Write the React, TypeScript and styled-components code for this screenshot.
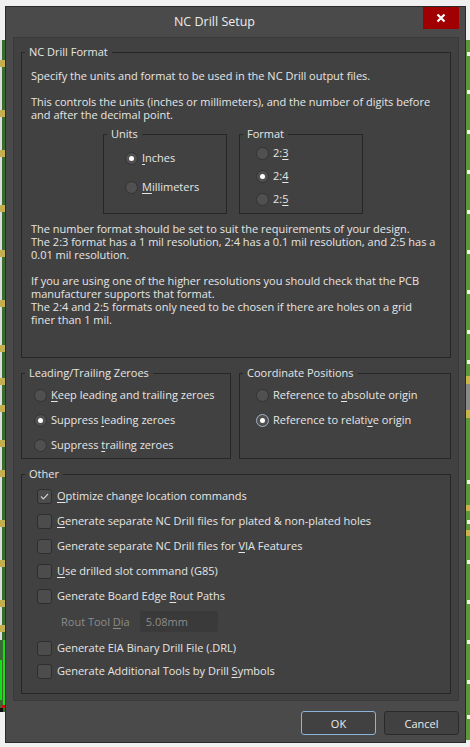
import React from 'react';
import styled, { createGlobalStyle } from 'styled-components';

const Global = createGlobalStyle`
  html, body { margin: 0; padding: 0; background: #f0f0f0; }
  body { font-family: "Open Sans", "Noto Sans", sans-serif; }
  #root { width: 470px; height: 747px; }
`;

const Stage = styled.div`
  width: 470px;
  height: 747px;
  display: grid;
  grid-template-columns: 5px 461px 4px;
  grid-template-rows: 6px 737px 4px;
  background: #f0f0f0;
  overflow: hidden;
`;

const Strip = styled.svg<{ $col: number }>`
  grid-column: ${(p) => p.$col};
  grid-row: 1 / span 3;
  display: block;
`;

const Window = styled.div`
  grid-column: 2;
  grid-row: 2;
  box-sizing: border-box;
  border: 1px solid #2a2a2a;
  background: #4a4a4a;
  display: flex;
  flex-direction: column;
  color: #e6e6e6;
  font-size: 11px;
`;

const TitleBar = styled.div`
  height: 30px;
  display: flex;
  align-items: flex-start;
  padding-right: 6px;
`;

const Title = styled.div`
  flex: 1;
  text-align: center;
  font-size: 12.5px;
  line-height: 30px;
  color: #ececec;
`;

const CloseButton = styled.div`
  width: 36px;
  height: 22px;
  background: #a00000;
  display: flex;
  align-items: center;
  justify-content: center;
`;

const Panel = styled.div`
  box-sizing: border-box;
  margin: 0 6px 0 7px;
  height: 664px;
  border: 1px solid #3a3a3a;
  background: #414141;
  padding: 7px 7px 0 7px;
  display: flex;
  flex-direction: column;
`;

const Frame = styled.fieldset<{ $h: number; $w?: number }>`
  box-sizing: border-box;
  margin: 0;
  padding: 0;
  border: 1px solid #262626;
  height: ${(p) => p.$h}px;
  ${(p) => (p.$w ? `width: ${p.$w}px; flex: none;` : '')}
  min-width: 0;
`;

const Legend = styled.legend`
  margin-left: 3px;
  padding: 0 4px 0 4px;
  line-height: 14px;
  font-size: 11px;
  color: #e6e6e6;
`;

const Para = styled.p<{ $top: number }>`
  margin: ${(p) => p.$top}px 0 0 9px;
  line-height: 13px;
  font-size: 11px;
`;

const BoxRow = styled.div`
  display: flex;
  gap: 12px;
  margin: 6px 0 0 81px;
`;

const SubFrame = styled(Frame)`
  width: 124px;
  flex: none;
`;

const OptionList = styled.div<{ $pl: number; $gap: number; $pt: number }>`
  display: flex;
  flex-direction: column;
  gap: ${(p) => p.$gap}px;
  padding: ${(p) => p.$pt}px 0 0 ${(p) => p.$pl}px;
`;

const Option = styled.div<{ $shift?: number }>`
  display: flex;
  align-items: center;
  gap: 4px;
  height: 16px;
  line-height: 16px;
  white-space: nowrap;
  color: #e6e6e6;
  margin-top: ${(p) => p.$shift ?? 0}px;
`;

const RadioDot = styled.span<{ $on?: boolean; $focus?: boolean }>`
  box-sizing: border-box;
  width: 13px;
  height: 13px;
  border-radius: 50%;
  flex: none;
  background: #505050;
  border: 1px solid ${(p) => (p.$focus ? '#9fb4c8' : '#333333')};
  display: flex;
  align-items: center;
  justify-content: center;
  &::after {
    content: '';
    width: 5px;
    height: 5px;
    border-radius: 50%;
    background: #ffffff;
    display: ${(p) => (p.$on ? 'block' : 'none')};
  }
`;

const CheckBox = styled.span`
  box-sizing: border-box;
  width: 15px;
  height: 15px;
  border-radius: 3px;
  flex: none;
  background: #4c4c4c;
  border: 1px solid #2e2e2e;
  display: flex;
  align-items: center;
  justify-content: center;
  margin-right: 1px;
`;

const Key = styled.span`
  text-decoration: underline;
  text-underline-offset: 2px;
`;

const TwoCols = styled.div`
  display: flex;
  gap: 8px;
  margin-top: 8px;
`;

const OtherFrame = styled(Frame)`
  margin-top: 8px;
`;

const RoutRow = styled.div`
  display: flex;
  align-items: center;
  gap: 10px;
  padding-left: 24px;
  height: 21px;
  margin: -2px 0 -1px 0;
  color: #8c8c8c;
`;

const DisabledInput = styled.div`
  box-sizing: border-box;
  width: 78px;
  height: 21px;
  border-radius: 3px;
  background: #3a3a3a;
  color: #8c8c8c;
  padding-left: 6px;
  line-height: 21px;
`;

const ButtonRow = styled.div`
  display: flex;
  justify-content: flex-end;
  gap: 8px;
  padding: 10px 6px 0 0;
`;

const Button = styled.div<{ $default?: boolean }>`
  box-sizing: border-box;
  width: 75px;
  height: 24px;
  border-radius: 3px;
  background: #414141;
  border: 1px solid ${(p) => (p.$default ? '#8cb4d8' : '#2a2a2a')};
  display: flex;
  align-items: center;
  justify-content: center;
  font-size: 11px;
  color: #ececec;
`;

const Check = () => (
  <svg width="11" height="11" viewBox="0 0 11 11">
    <path d="M2 5.5 L4.4 7.9 L9 3" fill="none" stroke="#d0d0d0" strokeWidth="1.1" />
  </svg>
);

const Radio: React.FC<{ on?: boolean; focus?: boolean; children: React.ReactNode }> = ({ on, focus, children }) => (
  <Option>
    <RadioDot $on={on} $focus={focus} />
    <span>{children}</span>
  </Option>
);

const CheckOption: React.FC<{ on?: boolean; shift?: number; children: React.ReactNode }> = ({ on, shift, children }) => (
  <Option $shift={shift}>
    <CheckBox>{on && <Check />}</CheckBox>
    <span>{children}</span>
  </Option>
);

const LeftStrip = () => (
  <Strip $col={1} width="5" height="747" viewBox="0 0 5 747">
    <rect x="0" y="40" width="5" height="672" fill="#3a6b30" />
    <rect x="0" y="40" width="2" height="600" fill="#dcdcdc" />
    {[60, 110, 150, 205, 250, 300, 345, 378, 405, 440, 470, 520, 560, 600, 625].map((y) => (
      <rect key={y} x="0" y={y} width="5" height="7" fill="#c4ae4e" />
    ))}
    <rect x="3" y="640" width="2" height="65" fill="#18e018" />
    <rect x="0" y="660" width="2" height="40" fill="#18e018" />
    <rect x="2" y="705" width="3" height="3" fill="#d01010" />
    <rect x="0" y="708" width="3" height="4" fill="#111111" />
  </Strip>
);

const RightStrip = () => (
  <Strip $col={3} width="4" height="747" viewBox="0 0 4 747">
    <rect x="0" y="40" width="4" height="700" fill="#5e963a" />
    {[52, 90, 130, 170, 210, 250, 290, 330, 360, 480, 520, 560, 600, 640, 680, 715].map((y) => (
      <rect key={y} x="1" y={y} width="3" height="4" fill="#f2f2f2" />
    ))}
    <rect x="0" y="376" width="4" height="8" fill="#c8b648" />
    <rect x="0" y="384" width="4" height="26" fill="#8a8a8a" />
    <rect x="0" y="410" width="4" height="8" fill="#c8b648" />
    <rect x="0" y="505" width="4" height="6" fill="#c8b648" />
    <rect x="0" y="530" width="4" height="6" fill="#c8b648" />
  </Strip>
);

export default function App() {
  return (
    <>
      <Global />
      <Stage>
        <LeftStrip />
        <Window>
          <TitleBar>
            <Title>NC Drill Setup</Title>
            <CloseButton>
              <svg width="10" height="10" viewBox="0 0 10 10">
                <path d="M1.5 1.5 L8.5 8.5 M8.5 1.5 L1.5 8.5" stroke="#ffffff" strokeWidth="2.2" />
              </svg>
            </CloseButton>
          </TitleBar>
          <Panel>
            <Frame $h={313}>
              <Legend>NC Drill Format</Legend>
              <Para $top={10}>
                Specify the units and format to be used in the NC Drill output files.
                <br />
                <br />
                This controls the units (inches or millimeters), and the number of digits before
                <br />
                and after the decimal point.
              </Para>
              <BoxRow>
                <SubFrame $h={87}>
                  <Legend>Units</Legend>
                  <OptionList $pl={21} $gap={13} $pt={9}>
                    <Radio on>
                      <Key>I</Key>nches
                    </Radio>
                    <Radio>
                      <Key>M</Key>illimeters
                    </Radio>
                  </OptionList>
                </SubFrame>
                <SubFrame $h={87}>
                  <Legend>Format</Legend>
                  <OptionList $pl={16} $gap={7} $pt={4}>
                    <Radio>
                      2:<Key>3</Key>
                    </Radio>
                    <Radio on>
                      2:<Key>4</Key>
                    </Radio>
                    <Radio>
                      2:<Key>5</Key>
                    </Radio>
                  </OptionList>
                </SubFrame>
              </BoxRow>
              <Para $top={8}>
                The number format should be set to suit the requirements of your design.
                <br />
                The 2:3 format has a 1 mil resolution, 2:4 has a 0.1 mil resolution, and 2:5 has a
                <br />
                0.01 mil resolution.
                <br />
                <br />
                If you are using one of the higher resolutions you should check that the PCB
                <br />
                manufacturer supports that format.
                <br />
                The 2:4 and 2:5 formats only need to be chosen if there are holes on a grid
                <br />
                finer than 1 mil.
              </Para>
            </Frame>
            <TwoCols>
              <Frame $h={93} $w={210}>
                <Legend>Leading/Trailing Zeroes</Legend>
                <OptionList $pl={12} $gap={9} $pt={7}>
                  <Radio>
                    <Key>K</Key>eep leading and trailing zeroes
                  </Radio>
                  <Radio on>
                    Suppress <Key>l</Key>eading zeroes
                  </Radio>
                  <Radio>
                    Suppress <Key>t</Key>railing zeroes
                  </Radio>
                </OptionList>
              </Frame>
              <Frame $h={93} $w={212}>
                <Legend>Coordinate Positions</Legend>
                <OptionList $pl={16} $gap={9} $pt={7}>
                  <Radio>
                    Reference to <Key>a</Key>bsolute origin
                  </Radio>
                  <Radio on focus>
                    Reference to relati<Key>v</Key>e origin
                  </Radio>
                </OptionList>
              </Frame>
            </TwoCols>
            <OtherFrame $h={227}>
              <Legend>Other</Legend>
              <OptionList $pl={15} $gap={9} $pt={7}>
                <CheckOption on>
                  <Key>O</Key>ptimize change location commands
                </CheckOption>
                <CheckOption>
                  <Key>G</Key>enerate separate NC Drill files for plated &amp; non-plated holes
                </CheckOption>
                <CheckOption>
                  Generate separate NC Drill files for <Key>V</Key>IA Features
                </CheckOption>
                <CheckOption>
                  <Key>U</Key>se drilled slot command (G85)
                </CheckOption>
                <CheckOption>
                  Generate Board Edge <Key>R</Key>out Paths
                </CheckOption>
                <RoutRow>
                  <span>
                    Rout Tool <Key>D</Key>ia
                  </span>
                  <DisabledInput>5.08mm</DisabledInput>
                </RoutRow>
                <CheckOption>Generate EIA Binary Drill File (.DRL)</CheckOption>
                <CheckOption shift={-2}>
                  Generate Additional Tools by Drill <Key>S</Key>ymbols
                </CheckOption>
              </OptionList>
            </OtherFrame>
          </Panel>
          <ButtonRow>
            <Button $default>OK</Button>
            <Button>Cancel</Button>
          </ButtonRow>
        </Window>
        <RightStrip />
      </Stage>
    </>
  );
}
